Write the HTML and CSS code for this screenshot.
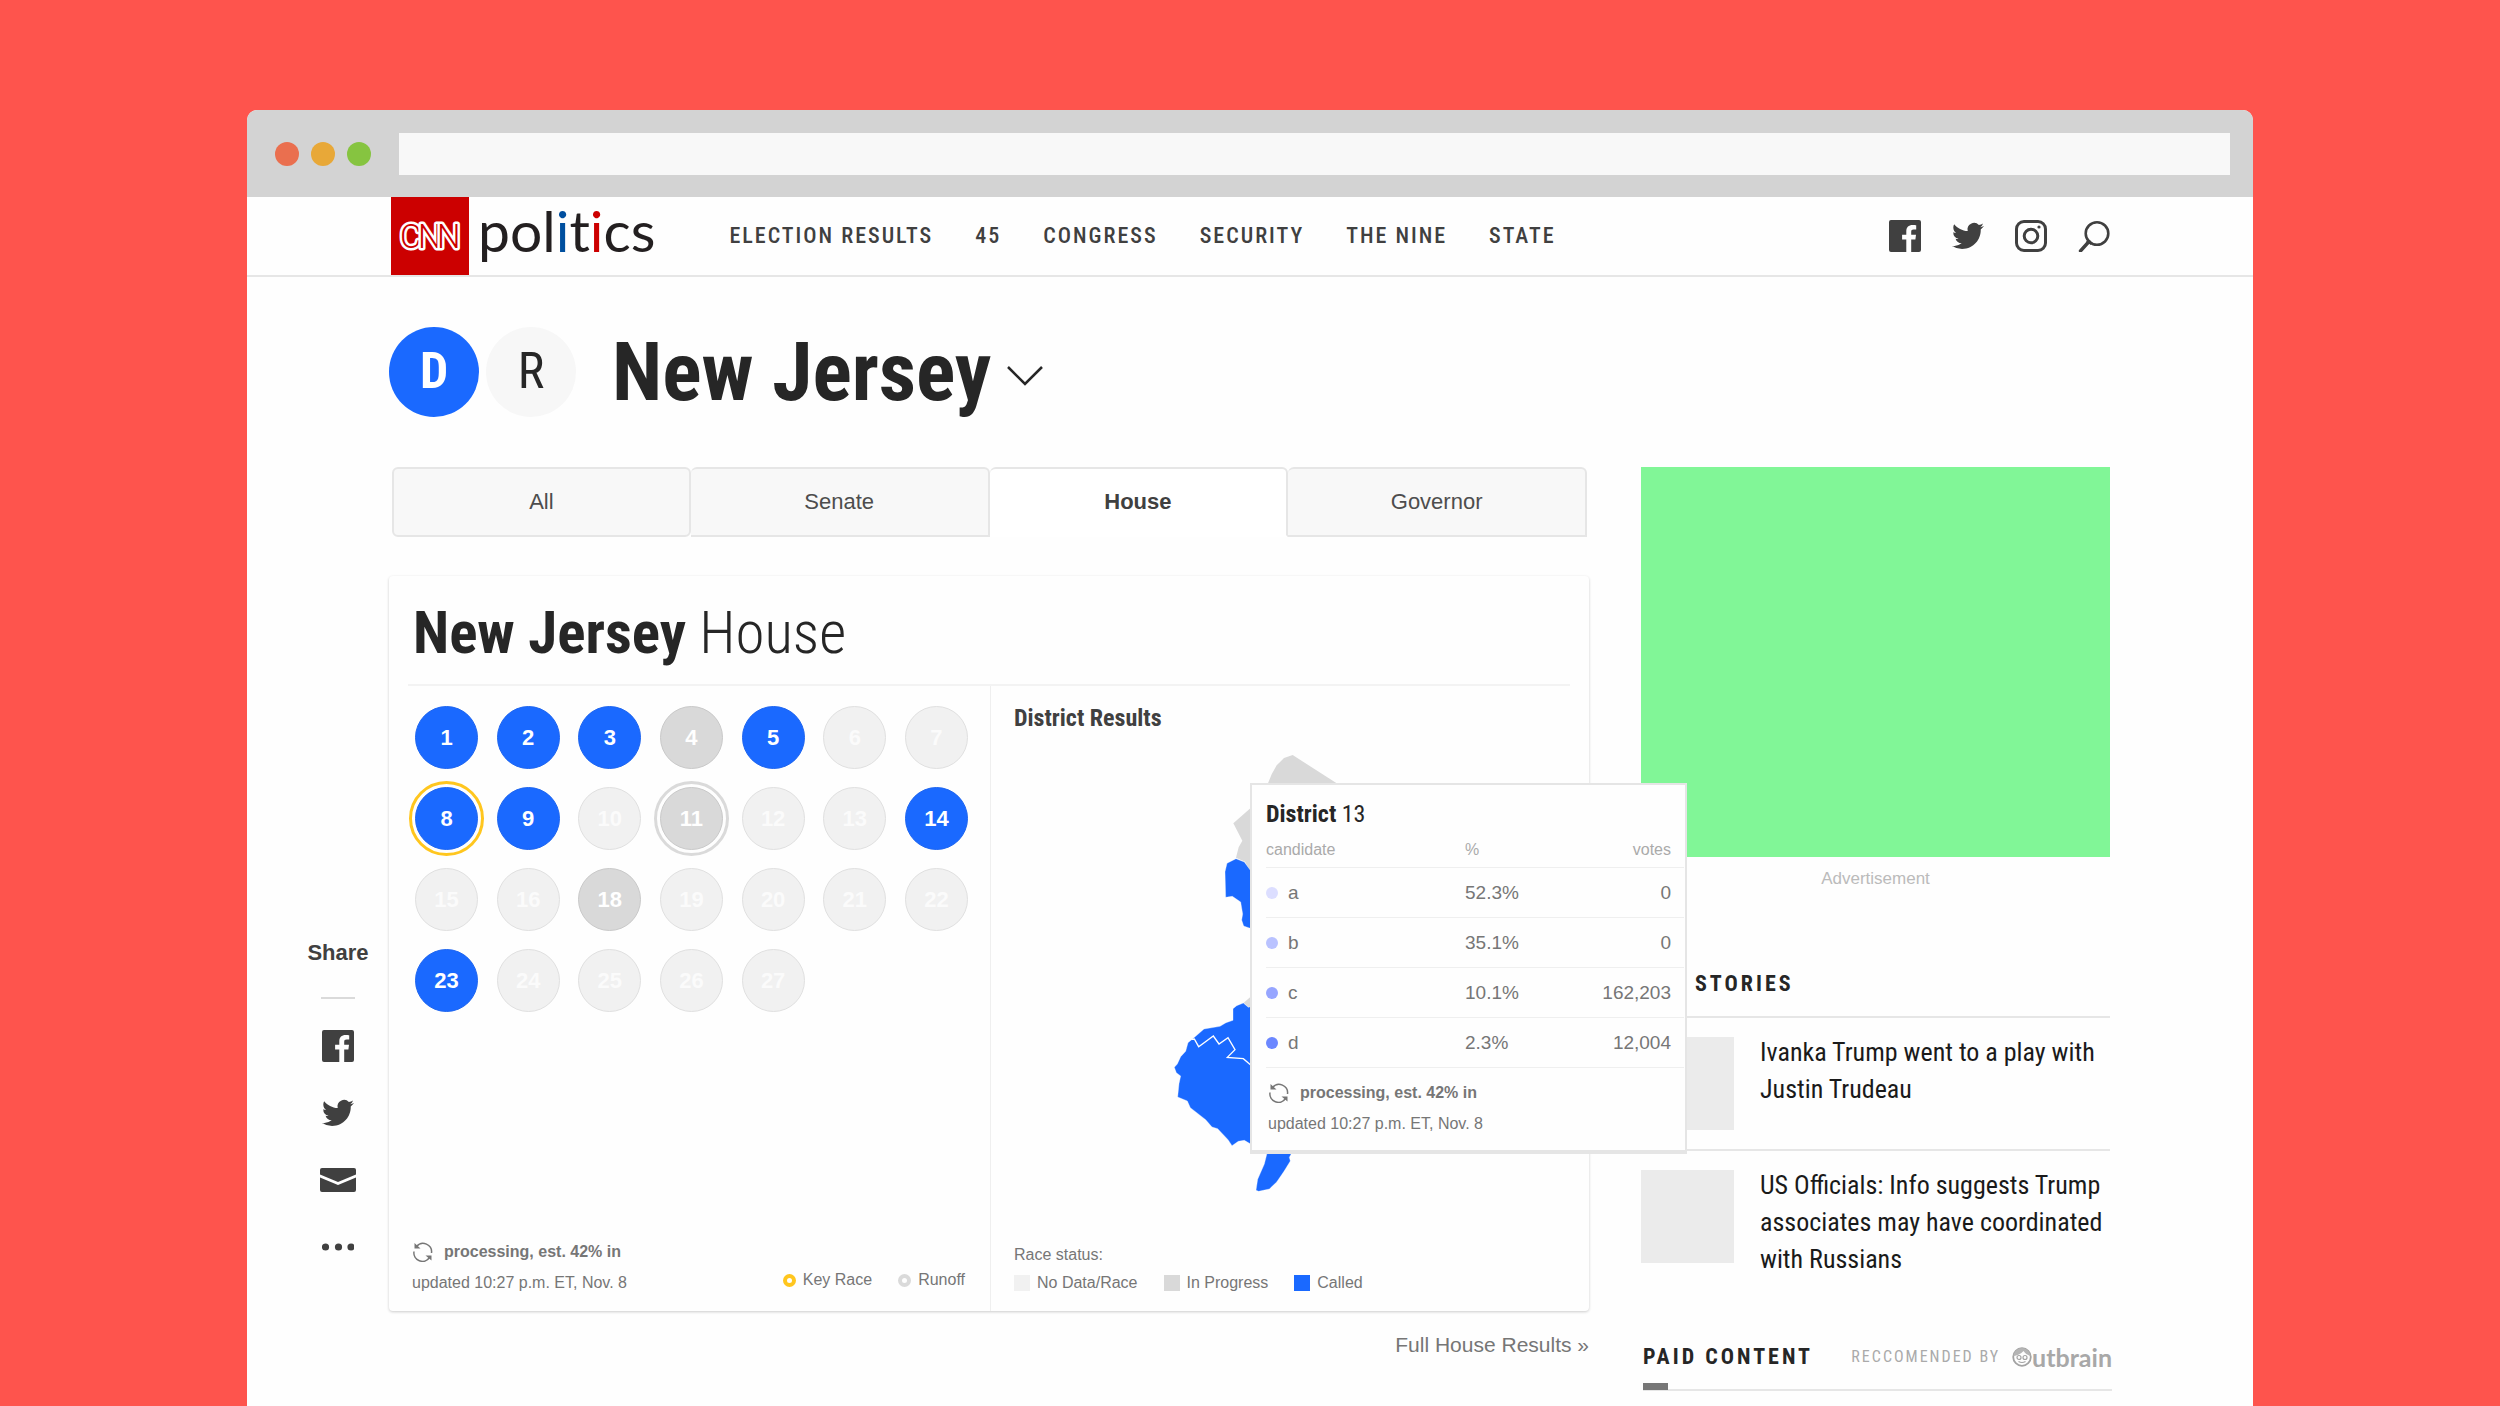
FILE: index.html
```html
<!DOCTYPE html>
<html lang="en">
<head>
<meta charset="utf-8">
<meta name="viewport" content="width=device-width, initial-scale=1">
<title>New Jersey House results</title>
<link rel="stylesheet" href="styles.css">
</head>
<body>
<svg class="sprite" aria-hidden="true">
  <symbol id="facebook" viewBox="0 0 32 32"><path d="M2 0H30a2 2 0 0 1 2 2V30a2 2 0 0 1-2 2H22.200V19.600h4.200l.6-4.800h-4.800v-3c0-1.400.5-2.300 2.500-2.300h2.500V5.200c-.6-.1-2-.2-3.700-.2-3.700 0-6.200 2.200-6.200 6.300v3.500h-4.200v4.800h4.200V32H2a2 2 0 0 1-2-2V2a2 2 0 0 1 2-2z"/></symbol>
  <symbol id="twitter" viewBox="0 0 24 24"><path d="M23.953 4.57a10 10 0 01-2.825.775 4.958 4.958 0 002.163-2.723c-.951.555-2.005.959-3.127 1.184a4.92 4.92 0 00-8.384 4.482C7.69 8.095 4.067 6.13 1.64 3.162a4.822 4.822 0 00-.666 2.475c0 1.71.87 3.213 2.188 4.096a4.904 4.904 0 01-2.228-.616v.06a4.923 4.923 0 003.946 4.827 4.996 4.996 0 01-2.212.085 4.936 4.936 0 004.604 3.417 9.867 9.867 0 01-6.102 2.105c-.39 0-.779-.023-1.17-.067a13.995 13.995 0 007.557 2.209c9.053 0 13.998-7.496 13.998-13.985 0-.21 0-.42-.015-.63A9.935 9.935 0 0024 4.59z"/></symbol>
  <symbol id="refresh" viewBox="0 0 22 20"><path d="M4.500 4.500A8.500 8.500 0 0 1 19.500 11M17.500 15.500A8.500 8.500 0 0 1 2 9.500" fill="none" stroke="currentColor" stroke-width="1.500"/><path d="M2.500 1v5.500H8.500zM19.500 18.500V13.500H13.500z"/></symbol>
</svg>

<div class="window">
  <div class="chrome">
    <span class="light light-close"></span>
    <span class="light light-min"></span>
    <span class="light light-max"></span>
    <input class="address" type="text" aria-label="Address">
  </div>

  <header class="site-header">
    <a class="brand" href="#" aria-label="CNN politics">
      <svg class="cnn" viewBox="0 0 78 78" aria-hidden="true">
        <text class="cnn-text" x="9 27 46" y="51">CNN</text>
      </svg>
      <span class="brand-name">pol<span class="blue">i</span>t<span class="red">i</span>cs</span>
    </a>
    <nav class="site-nav" aria-label="Sections">
      <a href="#">ELECTION RESULTS</a>
      <a href="#">45</a>
      <a href="#">CONGRESS</a>
      <a href="#">SECURITY</a>
      <a href="#">THE NINE</a>
      <a href="#">STATE</a>
    </nav>
    <div class="social">
      <a href="#" aria-label="Facebook"><svg class="icon"><use href="#facebook"/></svg></a>
      <a href="#" aria-label="Twitter"><svg class="icon"><use href="#twitter"/></svg></a>
      <a href="#" aria-label="Instagram"><svg class="icon icon-line" viewBox="0 0 32 32" stroke-width="3"><rect x="1.500" y="1.500" width="29" height="29" rx="7.500"/><circle cx="16" cy="16" r="6.800"/><circle cx="24" cy="7" r="1.600" fill="currentColor" stroke="none"/></svg></a>
      <button class="search" type="button" aria-label="Search"><svg class="icon icon-line" viewBox="0 0 32 32"><circle cx="19" cy="13.500" r="11.300" stroke-width="2.600"/><path d="M11 21.500L2.500 31" stroke-width="3.400" stroke-linecap="round"/><path d="M9 20.500l4.500 3.500" stroke-width="2.600"/></svg></button>
    </div>
  </header>

  <div class="state-bar">
    <span class="party party-on">D</span>
    <span class="party">R</span>
    <h1>New Jersey</h1>
    <button class="state-menu" type="button" aria-label="Choose a state"><svg class="icon-line" width="36" height="20" viewBox="0 0 36 20"><path d="M1 1L18 18 35 1" stroke-width="2.500"/></svg></button>
  </div>

  <div class="layout">
    <aside class="share">
      <h2>Share</h2>
      <span class="share-rule"></span>
      <a href="#" aria-label="Share on Facebook"><svg class="icon"><use href="#facebook"/></svg></a>
      <a href="#" aria-label="Share on Twitter"><svg class="icon"><use href="#twitter"/></svg></a>
      <a href="#" aria-label="Share by email"><svg class="icon icon-mail" viewBox="0 0 36 24"><path d="M2 0H34a2 2 0 0 1 2 2V6.500L18 14 0 6.500V2a2 2 0 0 1 2-2z"/><path d="M0 9.500L18 17 36 9.500V22a2 2 0 0 1-2 2H2a2 2 0 0 1-2-2z"/></svg></a>
      <button type="button" aria-label="More"><svg class="icon" viewBox="0 0 32 32"><circle cx="3.500" cy="16" r="3.600"/><circle cx="16.500" cy="16" r="3.600"/><circle cx="29" cy="16" r="3.600"/></svg></button>
    </aside>

    <main>
      <div class="tabs" role="tablist">
        <button class="tab tab-first" role="tab" type="button">All</button>
        <button class="tab" role="tab" type="button">Senate</button>
        <button class="tab tab-on" role="tab" type="button" aria-selected="true">House</button>
        <button class="tab" role="tab" type="button">Governor</button>
      </div>

      <section class="card">
        <h2 class="card-title"><strong>New Jersey</strong> House</h2>
        <div class="card-body">
          <div class="races">
            <div class="race-grid">
              <button class="race called" type="button">1</button>
              <button class="race called" type="button">2</button>
              <button class="race called" type="button">3</button>
              <button class="race progress" type="button">4</button>
              <button class="race called" type="button">5</button>
              <button class="race" type="button">6</button>
              <button class="race" type="button">7</button>
              <button class="race called key" type="button">8</button>
              <button class="race called" type="button">9</button>
              <button class="race" type="button">10</button>
              <button class="race progress runoff" type="button">11</button>
              <button class="race" type="button">12</button>
              <button class="race" type="button">13</button>
              <button class="race called" type="button">14</button>
              <button class="race" type="button">15</button>
              <button class="race" type="button">16</button>
              <button class="race progress" type="button">18</button>
              <button class="race" type="button">19</button>
              <button class="race" type="button">20</button>
              <button class="race" type="button">21</button>
              <button class="race" type="button">22</button>
              <button class="race called" type="button">23</button>
              <button class="race" type="button">24</button>
              <button class="race" type="button">25</button>
              <button class="race" type="button">26</button>
              <button class="race" type="button">27</button>
            </div>
            <div class="race-foot">
              <div class="status">
                <p class="processing"><svg class="refresh"><use href="#refresh"/></svg>processing, est. 42% in</p>
                <p>updated 10:27 p.m. ET, Nov. 8</p>
              </div>
              <ul class="legend legend-rings">
                <li><span class="ring ring-key"></span>Key Race</li>
                <li><span class="ring"></span>Runoff</li>
              </ul>
            </div>
          </div>

          <div class="district">
            <h3>District Results</h3>
            <svg class="map" viewBox="0 0 720 1380" role="img" aria-label="New Jersey district map">
              <path class="map-progress" d="M414 130L425 103 440 76 462 54 488 45 620 130 660 160 640 230 600 380 400 400 360 392 345 365 318 353 326 322 337 302 310 250 362 204 400 180z"/>
              <path class="map-progress" d="M341 788L362 770 420 760 420 810 357 802z"/>
              <path class="map-called" d="M291 370L318 356 343 366 362 392 420 420 400 560 358 564 341 558 335 540 338 522 332 486 307 469 287 472 285 395z"/>
              <path class="map-called" d="M309 806L320 797 340 789 355 802 362 800 560 830 540 1130 500 1200 482 1245 478 1252 481 1263 462 1294 440 1326 418 1347 386 1354 378 1351 383 1318 403 1272 411 1240 380 1215 362 1212 343 1201 325 1204 306 1217 294 1199 263 1166 246 1161 227 1139 181 1103 172 1083 143 1071 147 1031 152 1008 139 998 133 982 142 972 152 950 167 934 174 908 190 895 222 867 270 859 288 848 309 841z"/>
              <path class="map-line" d="M184 898L193 897 206 920 250 888 267 912 294 893 315 929 292 952 340 956 362 975 420 1000"/>
            </svg>
            <div class="map-legend">
              <p>Race status:</p>
              <ul class="legend">
                <li><span class="swatch"></span>No Data/Race</li>
                <li><span class="swatch swatch-progress"></span>In Progress</li>
                <li><span class="swatch swatch-called"></span>Called</li>
              </ul>
            </div>

            <div class="popup" role="tooltip">
              <h4><strong>District</strong> 13</h4>
              <table>
                <thead>
                  <tr><th scope="col">candidate</th><th scope="col">%</th><th scope="col">votes</th></tr>
                </thead>
                <tbody>
                  <tr><td><span class="dot dot-a"></span>a</td><td>52.3%</td><td>0</td></tr>
                  <tr><td><span class="dot dot-b"></span>b</td><td>35.1%</td><td>0</td></tr>
                  <tr><td><span class="dot dot-c"></span>c</td><td>10.1%</td><td>162,203</td></tr>
                  <tr><td><span class="dot dot-d"></span>d</td><td>2.3%</td><td>12,004</td></tr>
                </tbody>
              </table>
              <div class="status">
                <p class="processing"><svg class="refresh"><use href="#refresh"/></svg>processing, est. 42% in</p>
                <p>updated 10:27 p.m. ET, Nov. 8</p>
              </div>
            </div>
          </div>
        </div>
      </section>
      <a class="full-results" href="#">Full House Results »</a>
    </main>

    <aside class="side">
      <div class="ad"></div>
      <p class="ad-label">Advertisement</p>
      <h2 class="side-title stories-title">STORIES</h2>
      <article class="story">
        <span class="thumb"></span>
        <a href="#">Ivanka Trump went to a play with Justin Trudeau</a>
      </article>
      <article class="story">
        <span class="thumb"></span>
        <a href="#">US Officials: Info suggests Trump associates may have coordinated with Russians</a>
      </article>
      <div class="paid">
        <h2 class="side-title paid-title">PAID CONTENT</h2>
        <span class="paid-by">RECCOMENDED BY</span>
        <a class="outbrain" href="#" aria-label="Outbrain"><svg width="20" height="20" viewBox="0 0 20 20"><circle cx="10" cy="10" r="8.800" fill="none" stroke="#a3a3a3" stroke-width="1.800"/><path d="M1.500 9C2 4 6 1 10 1s8 3 8.500 8C15 8 13 6 11.500 4 9 7 5 8.500 1.500 9z" fill="#b5b5b5"/><g fill="none" stroke="#a3a3a3" stroke-width="1.200"><circle cx="7" cy="10.500" r="2"/><circle cx="13" cy="10.500" r="2"/><path d="M6.500 14.500q3.500 2 7 0"/></g></svg>utbrain</a>
      </div>
    </aside>
  </div>
</div>
</body>
</html>
```
FILE: styles.css
```css
* { box-sizing: border-box; }

:root {
  --sans: "Liberation Sans", Arial, sans-serif;
  --narrow: "Liberation Sans Narrow", "Roboto Condensed", Roboto, sans-serif;
  --blue: #1a69ff;
  --ink: #262626;
  --dark: #404040;
  --grey: #767676;
  --line: #e6e6e6;
}

body {
  margin: 0;
  padding: 110px 247px 0;
  background: #fe544d;
  color: var(--dark);
  font-family: var(--sans);
}

h1, h2, h3, h4, p, ul { margin: 0; padding: 0; }
ul { list-style: none; }
strong { font-weight: bold; }
a { color: inherit; text-decoration: none; }
button { padding: 0; border: 0; background: none; color: inherit; font: inherit; cursor: pointer; }
svg { display: block; fill: currentColor; }
.sprite { position: absolute; width: 0; height: 0; }
.icon { width: 32px; height: 32px; }
.icon-line { fill: none; stroke: currentColor; }

.window {
  min-height: calc(100vh - 110px);
  background: #fefefe;
  border-radius: 10px 10px 0 0;
  overflow: hidden;
}

.chrome {
  display: flex;
  align-items: center;
  gap: 12px;
  height: 87px;
  padding: 0 23px 0 28px;
  background: #d3d3d3;
}
.light { width: 24px; height: 24px; border-radius: 50%; }
.light-close { background: #ea6f4f; }
.light-min { background: #e8a838; }
.light-max { background: #86c440; }
.address {
  flex: 1;
  height: 42px;
  margin-left: 16px;
  border: 0;
  background: #f8f8f8;
}

.site-header {
  display: flex;
  align-items: center;
  height: 80px;
  padding: 0 143px 0 144px;
  border-bottom: 2px solid var(--line);
}
.brand { display: flex; gap: 9px; }
.cnn { width: 78px; height: 78px; background: #c00; }
.cnn-text {
  font: 300 33px Roboto, sans-serif;
  fill: #c00;
  stroke: #fff;
  stroke-width: 5px;
  stroke-linejoin: round;
  paint-order: stroke;
}
.brand-name {
  color: #231f20;
  font: 57px/66px Lato, sans-serif;
  font-variant-ligatures: none;
}
.blue { color: #004f9f; }
.red { color: #c00; }
.site-nav {
  display: flex;
  gap: 42px;
  margin-left: 74px;
  font: 500 22px/28px var(--narrow);
  letter-spacing: 2px;
}
.social { display: flex; gap: 31px; margin-left: auto; }

.state-bar {
  display: flex;
  align-items: center;
  gap: 7px;
  padding: 50px 143px 50px 142px;
}
.party {
  width: 90px;
  height: 90px;
  border-radius: 50%;
  background: #f7f7f7;
  color: var(--ink);
  font: 50px/88px var(--narrow);
  text-align: center;
}
.party-on { background: var(--blue); color: #fff; font-weight: bold; }
.state-bar h1 {
  margin-left: 29px;
  color: var(--ink);
  font: bold 82px/90px var(--narrow);
}
.state-menu { margin: 8px 0 0 9px; color: var(--ink); }

.layout {
  display: grid;
  grid-template-columns: 66px minmax(0, 1fr) 469px;
  padding: 0 143px 0 57px;
}

.share {
  display: flex;
  flex-direction: column;
  align-items: center;
  gap: 35px;
  padding: 473px 0 0 2px;
}
.share h2 { font: bold 22px/26px var(--sans); }
.share-rule { width: 34px; height: 2px; margin: -4px 0; background: #dadada; }
.icon-mail { width: 36px; }

main { margin: 0 52px 0 19px; }
.tabs {
  display: grid;
  grid-template-columns: repeat(4, 1fr);
  padding: 0 2px 0 3px;
}
.tab {
  height: 70px;
  border: 2px solid var(--line);
  border-left-width: 0;
  border-radius: 6px 6px 0 0;
  background: #f8f8f8;
  color: #4d4d4d;
  font-size: 22px;
}
.tab-first { border-left-width: 2px; border-radius: 6px; }
.tab-on { border-bottom-color: transparent; background: #fff; color: var(--dark); font-weight: bold; }

.card {
  margin-top: 39px;
  padding-top: 25px;
  border-radius: 4px;
  background: #fefefe;
  box-shadow: 0 1px 3px rgba(0, 0, 0, .2);
}
.card-title {
  margin: 0 19px;
  padding: 0 5px 19px;
  border-bottom: 2px solid #f3f3f3;
  color: var(--ink);
  font: 300 59px/64px var(--narrow);
}
.card-body {
  display: grid;
  grid-template-columns: 602px minmax(0, 1fr);
  min-height: 625px;
}
.races {
  display: flex;
  flex-direction: column;
  justify-content: space-between;
  padding: 20px 22px 18px 26px;
  border-right: 1px solid #efefef;
}
.race-grid {
  display: grid;
  grid-template-columns: repeat(7, 63px);
  justify-content: space-between;
  row-gap: 18px;
}
.race {
  height: 63px;
  border: 1px solid #e0e0e0;
  border-radius: 50%;
  background: #f1f1f1;
  color: #fbfbfb;
  font: bold 22px/61px var(--sans);
}
.race.called { border-color: #1f66f0; background: var(--blue); color: #fff; }
.race.progress { border-color: #c9c9c9; background: #d9d9d9; color: #fff; }
.race.key { outline: 3px solid #ffc61e; outline-offset: 3px; }
.race.runoff { outline: 3px solid #dadada; outline-offset: 3px; }

.race-foot { display: flex; justify-content: space-between; align-items: flex-end; margin: 0 3px 0 -3px; }
.status { color: var(--grey); font-size: 16px; line-height: 20px; }
.processing {
  display: flex;
  gap: 10px;
  margin-bottom: 11px;
  font-weight: bold;
}
.refresh { width: 22px; height: 20px; }
.legend { display: flex; gap: 26px; color: var(--grey); font-size: 16px; line-height: 20px; }
.legend li { display: flex; align-items: center; gap: 7px; }
.legend-rings { padding-bottom: 3px; }
.ring { width: 13px; height: 13px; border: 4px solid #dadada; border-radius: 50%; }
.ring-key { border-color: #ffc61e; }

.district {
  position: relative;
  display: flex;
  flex-direction: column;
  padding: 18px 0 18px 23px;
}
.district h3 { font: bold 24px/28px var(--narrow); }
.map { width: 240px; height: 460px; margin: 8px 0 0 116px; }
.map-progress { fill: #d9d9d9; }
.map-called { fill: var(--blue); stroke: #fff; stroke-width: 1; }
.map-line { fill: none; stroke: #fff; stroke-width: 4; }
.map-legend { margin-top: auto; color: var(--grey); font-size: 16px; line-height: 20px; }
.map-legend p { margin-bottom: 8px; }
.swatch { width: 16px; height: 16px; background: #f1f1f1; }
.swatch-progress { background: #d9d9d9; }
.swatch-called { background: var(--blue); }

.popup {
  position: absolute;
  top: 97px;
  left: 259px;
  z-index: 2;
  width: 437px;
  padding: 15px 1px 16px 14px;
  border: 2px solid #e5e5e5;
  border-bottom-width: 4px;
  background: #fefefe;
}
.popup h4 { color: var(--ink); font: 24px/28px var(--narrow); }
.popup table { width: 100%; border-collapse: collapse; }
.popup th {
  height: 39px;
  padding: 12px 0 7px;
  border-bottom: 1px solid #efefef;
  color: #aaa;
  font: 16px/20px var(--sans);
  text-align: left;
}
.popup th:first-child { width: 199px; }
.popup td {
  height: 50px;
  padding: 12px 0;
  border-bottom: 1px solid #efefef;
  color: var(--grey);
  font-size: 19px;
  line-height: 24px;
}
.popup th:last-child, .popup td:last-child { padding-right: 13px; text-align: right; }
.dot { display: inline-block; width: 12px; height: 12px; margin-right: 10px; border-radius: 50%; }
.dot-a { background: #dcdeff; }
.dot-b { background: #b9c2ff; }
.dot-c { background: #96a5ff; }
.dot-d { background: #6b87ff; }
.popup .status { margin: 15px 0 0 2px; }

.full-results {
  display: block;
  margin-top: 20px;
  color: var(--grey);
  font-size: 21px;
  line-height: 28px;
  text-align: right;
}

.ad { height: 390px; background: #81f697; }
.ad-label { margin-top: 12px; color: #bbb; font-size: 17px; line-height: 20px; text-align: center; }
.side-title {
  color: var(--ink);
  font: bold 22px/28px var(--narrow);
  letter-spacing: 3px;
}
.stories-title { margin-top: 81px; padding: 0 0 18px 54px; }
.story {
  display: flex;
  gap: 26px;
  padding: 16px 0 19px;
  border-top: 2px solid var(--line);
  color: #1a1a1a;
  font: 26px/37px var(--narrow);
}
.thumb { flex: none; width: 93px; height: 93px; margin-top: 3px; background: #ebebeb; }
.paid {
  position: relative;
  display: flex;
  align-items: center;
  gap: 12px;
  margin: 46px -2px 0 2px;
  padding-bottom: 18px;
  border-bottom: 2px solid var(--line);
}
.paid::after {
  content: "";
  position: absolute;
  left: 0;
  bottom: -1px;
  width: 25px;
  height: 7px;
  background: #777;
}
.paid-by { margin-left: auto; color: #aaa; font: 16px/20px var(--narrow); letter-spacing: 2px; }
.outbrain { display: flex; align-items: center; color: #a8a8a8; font: bold 25px/24px Lato, sans-serif; }
```
